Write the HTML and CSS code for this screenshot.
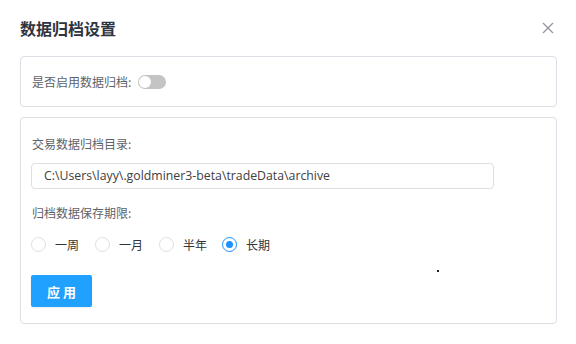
FILE: index.html
```
<!DOCTYPE html>
<html>
	<head>
		<meta charset="UTF-8">
		<title>数据归档设置</title>
		<link rel="stylesheet" href="styles.css">
	</head>
	<body>
		<div class="dialog">
			<div class="dialog-head">
				<span class="dialog-title">数据归档设置</span>
				<span class="dialog-close">
					<svg width="12" height="12" viewBox="0 0 12 12"><path d="M1 1L11 11M11 1L1 11" stroke="#909399" stroke-width="1.2" fill="none"/></svg>
				</span>
			</div>
			<div class="card card-switch">
				<span class="label">是否启用数据归档:</span>
				<span class="switch"><span class="switch-knob"></span></span>
			</div>
			<div class="card card-form">
				<div class="label">交易数据归档目录:</div>
				<div class="input">C:\Users\layy\.goldminer3-beta\tradeData\archive</div>
				<div class="label label-2">归档数据保存期限:</div>
				<div class="radios">
					<label class="radio"><span class="radio-dot"></span>一周</label>
					<label class="radio"><span class="radio-dot"></span>一月</label>
					<label class="radio"><span class="radio-dot"></span>半年</label>
					<label class="radio checked"><span class="radio-dot"></span>长期</label>
				</div>
				<div><button class="btn">应用</button></div>
				<span class="speck"></span>
			</div>
		</div>
	</body>
</html>
```
FILE: styles.css
```
*{
	margin: 0;
	padding: 0;
	box-sizing: border-box;
}
body{
	background: #fff;
	font-family: "Noto Sans CJK SC", "Noto Sans", sans-serif;
	color: #606266;
}
.dialog{
	width: 576px;
	height: 344px;
	padding: 0 19px 0 20px;
}
.dialog-head{
	height: 56px;
	display: flex;
	align-items: center;
	justify-content: space-between;
	padding-bottom: 1px;
}
.dialog-title{
	font-size: 16px;
	font-weight: bold;
	color: #2f3540;
	line-height: 20px;
}
.dialog-close{
	width: 12px;
	height: 12px;
	margin-right: 3px;
	display: flex;
}
.card{
	border: 1px solid #dcdfe6;
	border-radius: 4px;
	position: relative;
}
.card-switch{
	height: 51px;
	display: flex;
	align-items: center;
	padding-left: 11px;
}
.label{
	font-size: 12px;
	line-height: 18px;
	color: #606266;
}
.switch{
	width: 28px;
	height: 14px;
	border-radius: 7px;
	background: #c4c4c4;
	margin-left: 7px;
	margin-top: 1px;
	position: relative;
}
.switch-knob{
	position: absolute;
	left: 1px;
	top: 1px;
	width: 12px;
	height: 12px;
	border-radius: 50%;
	background: #fff;
}
.card-form{
	margin-top: 10px;
	height: 207px;
	padding: 17px 10px 0;
}
.card-form .label{
	padding-left: 1px;
}
.input{
	margin-top: 10px;
	width: 463px;
	height: 26px;
	border: 1px solid #dcdfe6;
	border-radius: 4px;
	padding-left: 12px;
	font-family: "Open Sans", "Noto Sans", sans-serif;
	font-size: 12.3px;
	line-height: 24px;
	color: #404040;
}
.label-2{
	margin-top: 15px;
}
.radios{
	margin-top: 13px;
	display: flex;
	height: 18px;
	align-items: center;
}
.radio{
	width: 64px;
	display: flex;
	align-items: center;
	font-size: 12px;
	color: #333;
}
.radio:nth-child(3){
	width: 63px;
}
.radio-dot{
	flex: none;
	width: 15px;
	height: 15px;
	border: 1px solid #dcdfe6;
	border-radius: 50%;
	margin-right: 9px;
	position: relative;
	background: #fff;
}
.checked .radio-dot{
	border-color: #1e90ff;
}
.checked .radio-dot::after{
	content: "";
	position: absolute;
	left: 3px;
	top: 3px;
	width: 7px;
	height: 7px;
	border-radius: 50%;
	background: #1e90ff;
}
.btn{
	margin-top: 22px;
	width: 61px;
	height: 32px;
	border: none;
	border-radius: 2px;
	background: #20a0ff;
	color: #fff;
	font-family: "Noto Sans CJK SC", sans-serif;
	font-size: 13px;
	font-weight: bold;
	letter-spacing: 3px;
	padding-left: 3px;
	box-shadow: 0 1px 2px rgba(0,0,0,0.08);
}
.speck{
	position: absolute;
	left: 416px;
	top: 152px;
	width: 2px;
	height: 2px;
	background: #222;
}
```
